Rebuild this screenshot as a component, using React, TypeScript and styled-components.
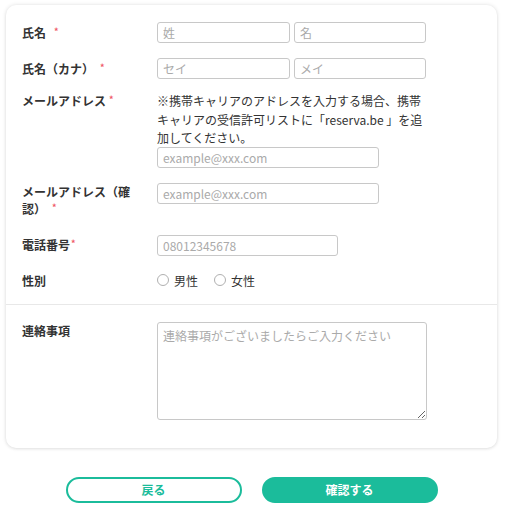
import React from "react";
import styled, { createGlobalStyle } from "styled-components";

const Global = createGlobalStyle`
  html, body { margin: 0; padding: 0; background: #fff; }
  body { font-family: "Noto Sans CJK JP", "Noto Sans", sans-serif; color: #333; }
  * { box-sizing: border-box; }
`;

const Page = styled.div`
  width: 491px;
  margin: 5px 0 0 6px;
`;

const Card = styled.div`
  background: #fff;
  border-radius: 10px;
  box-shadow: 0 0 4px rgba(0, 0, 0, 0.12), 0 1px 3px rgba(0, 0, 0, 0.06);
`;

const Section = styled.div<{ $pt: number; $pb: number }>`
  padding: ${(p) => p.$pt}px 16px ${(p) => p.$pb}px 16px;
  display: flex;
  flex-direction: column;
`;

const Divider = styled.div`
  height: 1px;
  background: #e8e8e8;
`;

const Row = styled.div<{ $mb?: number }>`
  display: grid;
  grid-template-columns: 135px 1fr;
  margin-bottom: ${(p) => p.$mb ?? 0}px;
`;

const Label = styled.div<{ $pt?: number }>`
  font-size: 12px;
  font-weight: 700;
  line-height: 17px;
  padding-top: ${(p) => p.$pt ?? 0}px;
  padding-right: 14px;
  color: #333;
`;

const Req = styled.span<{ $gap?: number }>`
  display: inline-block;
  color: #ef5a6a;
  font-size: 9px;
  line-height: 1;
  margin-left: ${(p) => p.$gap ?? 2}px;
  vertical-align: 3px;
`;

const Field = styled.div`
  display: flex;
  flex-direction: column;
`;

const Pair = styled.div`
  display: flex;
  gap: 4px;
`;

const Input = styled.input<{ $w: number }>`
  width: ${(p) => p.$w}px;
  height: 21px;
  border: 1px solid #c8c8c8;
  border-radius: 3px;
  padding: 0 5px;
  font-family: "Noto Sans CJK JP", "Noto Sans", sans-serif;
  font-size: 12px;
  color: #333;
  background: #fff;
  outline: none;
  &::placeholder { color: #aaa; }
`;

const Note = styled.p`
  margin: 0 0 -1px 0;
  font-size: 12px;
  line-height: 18.5px;
  color: #333;
  width: 270px;
`;

const Radios = styled.div`
  display: flex;
  align-items: center;
  gap: 16px;
  height: 17px;
`;

const RadioItem = styled.label`
  display: flex;
  align-items: center;
  gap: 5px;
  font-size: 12px;
  color: #333;
`;

const Circle = styled.span`
  width: 12px;
  height: 12px;
  border-radius: 50%;
  border: 1px solid #b0b0b0;
  background: #fff;
  display: inline-block;
`;

const TextArea = styled.textarea`
  width: 270px;
  height: 98px;
  border: 1px solid #c8c8c8;
  border-radius: 3px;
  padding: 4px 5px;
  font-family: "Noto Sans CJK JP", "Noto Sans", sans-serif;
  font-size: 12px;
  color: #333;
  resize: both;
  outline: none;
  &::placeholder { color: #aaa; }
`;

const Buttons = styled.div`
  display: flex;
  justify-content: center;
  gap: 20px;
  margin-top: 29px;
`;

const Btn = styled.button<{ $primary?: boolean }>`
  width: 176px;
  height: 26px;
  border-radius: 13px;
  border: 2px solid #1bbc9b;
  background: ${(p) => (p.$primary ? "#1bbc9b" : "#fff")};
  color: ${(p) => (p.$primary ? "#fff" : "#1bbc9b")};
  font-family: "Noto Sans CJK JP", "Noto Sans", sans-serif;
  font-size: 12px;
  font-weight: 700;
  padding: 0;
  cursor: pointer;
`;

export default function App() {
  return (
    <>
      <Global />
      <Page>
        <Card>
          <Section $pt={17} $pb={15}>
            <Row $mb={15}>
              <Label $pt={2}>
                氏名<Req $gap={8}>*</Req>
              </Label>
              <Pair>
                <Input $w={133} placeholder="姓" />
                <Input $w={132} placeholder="名" />
              </Pair>
            </Row>
            <Row $mb={13}>
              <Label $pt={2}>
                氏名（カナ）<Req $gap={6}>*</Req>
              </Label>
              <Pair>
                <Input $w={133} placeholder="セイ" />
                <Input $w={132} placeholder="メイ" />
              </Pair>
            </Row>
            <Row $mb={15}>
              <Label>
                メールアドレス<Req $gap={3}>*</Req>
              </Label>
              <Field>
                <Note>
                  ※携帯キャリアのアドレスを入力する場合、携帯キャリアの受信許可リストに「reserva.be 」を追加してください。
                </Note>
                <Input $w={222} placeholder="example@xxx.com" />
              </Field>
            </Row>
            <Row $mb={18}>
              <Label $pt={0}>
                メールアドレス（確
                <br />
                認）<Req $gap={6}>*</Req>
              </Label>
              <Field>
                <Input $w={222} placeholder="example@xxx.com" />
              </Field>
            </Row>
            <Row $mb={16}>
              <Label $pt={1}>
                電話番号<Req $gap={1}>*</Req>
              </Label>
              <Field>
                <Input $w={181} placeholder="08012345678" />
              </Field>
            </Row>
            <Row>
              <Label>性別</Label>
              <Radios>
                <RadioItem>
                  <Circle />
                  男性
                </RadioItem>
                <RadioItem>
                  <Circle />
                  女性
                </RadioItem>
              </Radios>
            </Row>
          </Section>
          <Divider />
          <Section $pt={17} $pb={28}>
            <Row>
              <Label $pt={0}>連絡事項</Label>
              <Field>
                <TextArea placeholder="連絡事項がございましたらご入力ください" />
              </Field>
            </Row>
          </Section>
        </Card>
        <Buttons>
          <Btn>戻る</Btn>
          <Btn $primary>確認する</Btn>
        </Buttons>
      </Page>
    </>
  );
}
